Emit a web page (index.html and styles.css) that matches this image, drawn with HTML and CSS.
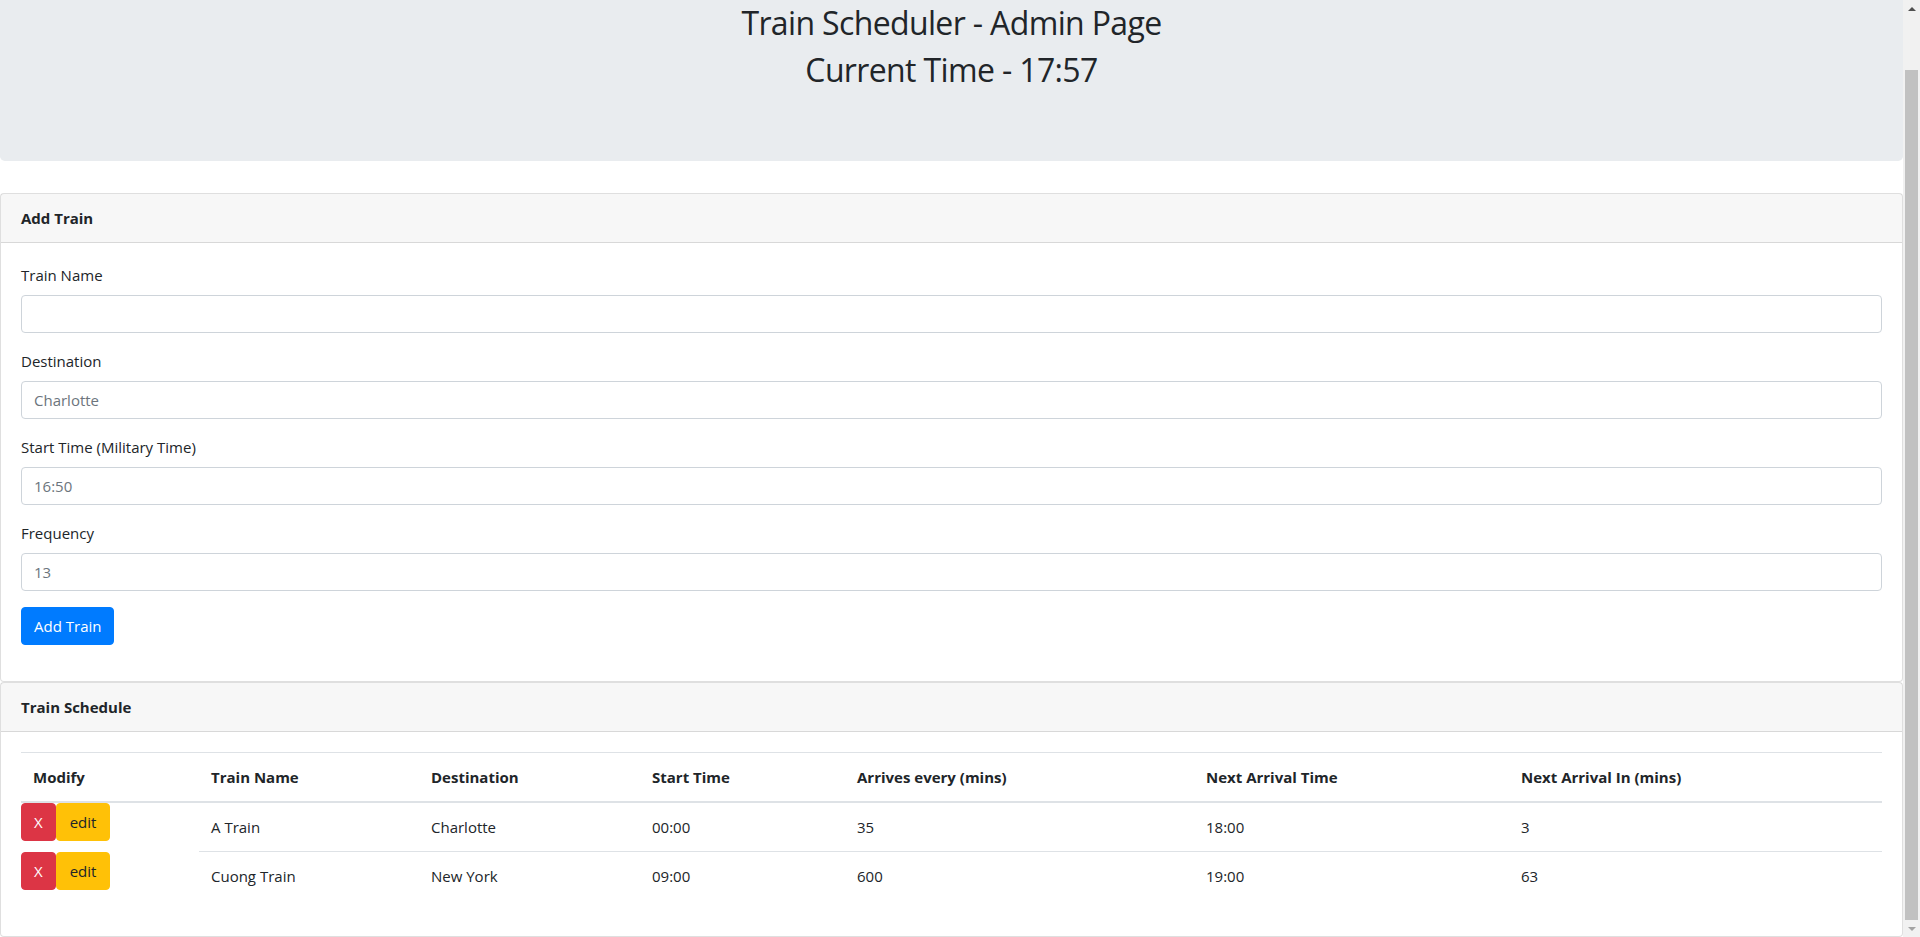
FILE: index.html
```html
<!DOCTYPE html>
<html lang="en">
<head>
<meta charset="utf-8">
<title>Train Scheduler - Admin Page</title>
<link rel="stylesheet" href="styles.css">
</head>
<body>
<div class="app">
  <main class="viewport">
    <div class="jumbotron">
      <h2>Train Scheduler - Admin Page</h2>
      <h2>Current Time - 17:57</h2>
    </div>

    <section class="card">
      <div class="card-header">Add Train</div>
      <div class="card-body">
        <form class="form">
          <div class="form-group">
            <label>Train Name</label>
            <input class="form-control" type="text">
          </div>
          <div class="form-group">
            <label>Destination</label>
            <input class="form-control" type="text" placeholder="Charlotte">
          </div>
          <div class="form-group">
            <label>Start Time (Military Time)</label>
            <input class="form-control" type="text" placeholder="16:50">
          </div>
          <div class="form-group">
            <label>Frequency</label>
            <input class="form-control" type="text" placeholder="13">
          </div>
          <button type="button" class="btn btn-primary">Add Train</button>
        </form>
      </div>
    </section>

    <section class="card">
      <div class="card-header">Train Schedule</div>
      <div class="card-body">
        <table class="table">
          <colgroup>
            <col class="c1"><col class="c2"><col class="c3"><col class="c4"><col class="c5"><col class="c6"><col class="c7">
          </colgroup>
          <thead>
            <tr>
              <th>Modify</th>
              <th>Train Name</th>
              <th>Destination</th>
              <th>Start Time</th>
              <th>Arrives every (mins)</th>
              <th>Next Arrival Time</th>
              <th>Next Arrival In (mins)</th>
            </tr>
          </thead>
          <tbody>
            <tr>
              <td class="modify"><button type="button" class="btn btn-danger">X</button><button type="button" class="btn btn-warning">edit</button></td>
              <td>A Train</td>
              <td>Charlotte</td>
              <td>00:00</td>
              <td>35</td>
              <td>18:00</td>
              <td>3</td>
            </tr>
            <tr>
              <td class="modify"><button type="button" class="btn btn-danger">X</button><button type="button" class="btn btn-warning">edit</button></td>
              <td>Cuong Train</td>
              <td>New York</td>
              <td>09:00</td>
              <td>600</td>
              <td>19:00</td>
              <td>63</td>
            </tr>
          </tbody>
        </table>
      </div>
    </section>
  </main>

  <div class="scrollbar">
    <div class="sb-btn sb-up"></div>
    <div class="sb-track"><div class="sb-thumb"></div></div>
    <div class="sb-btn sb-down"></div>
  </div>
</div>
</body>
</html>
```

FILE: styles.css
```css
html, body {
  margin: 0;
  height: 100%;
}

body {
  font-family: "Open Sans", "Noto Sans", sans-serif;
  font-size: 16px;
  line-height: 24px;
  color: #212529;
  background: #fff;
  overflow: hidden;
}

.app {
  display: flex;
  height: 100vh;
}

.viewport {
  flex: 1;
  min-width: 0;
  display: flex;
  flex-direction: column;
  justify-content: flex-end;
  overflow: hidden;
}

.viewport > * {
  flex-shrink: 0;
}

/* Jumbotron */
.jumbotron {
  background: #e9ecef;
  padding: 64px 32px;
  margin-bottom: 32px;
  border-radius: 4.8px;
  text-align: center;
}

.jumbotron h2 {
  font-size: 32px;
  font-weight: 400;
  line-height: 38.4px;
  margin: 0 0 8px;
  letter-spacing: -0.02em;
}

/* Card */
.card {
  background: #fff;
  border: 1px solid rgba(0, 0, 0, 0.125);
  border-radius: 4px;
}

.card-header {
  padding: 12px 20px;
  background: rgba(0, 0, 0, 0.03);
  border-bottom: 1px solid rgba(0, 0, 0, 0.125);
  font-weight: 700;
  font-size: 15px;
  line-height: 24px;
}

.card-body {
  padding: 20px;
}

.form {
  margin: 0 0 16px;
}

.form-group {
  margin-bottom: 16px;
}

.form-group label {
  display: inline-block;
  margin-bottom: 8px;
  font-size: 15px;
  line-height: 24px;
}

.form-control {
  display: block;
  box-sizing: border-box;
  width: 100%;
  height: 38px;
  padding: 6px 12px;
  font-family: inherit;
  font-size: 15px;
  line-height: 24px;
  color: #495057;
  background: #fff;
  border: 1px solid #ced4da;
  border-radius: 4px;
  margin: 0;
}

.form-control::placeholder {
  color: #6c757d;
  opacity: 1;
}

/* Buttons */
.btn {
  display: inline-block;
  box-sizing: border-box;
  font-family: inherit;
  font-size: 15px;
  line-height: 24px;
  height: 38px;
  padding: 6px 12px;
  border: 1px solid transparent;
  border-radius: 4px;
  margin: 0;
  cursor: pointer;
  vertical-align: top;
}

.btn-primary {
  color: #fff;
  background: #007bff;
  border-color: #007bff;
}

.btn-danger {
  color: #fff;
  background: #dc3545;
  border-color: #dc3545;
}

.btn-warning {
  color: #212529;
  background: #ffc107;
  border-color: #ffc107;
  padding: 6px 13px;
}

/* Table */
.table {
  width: 100%;
  table-layout: fixed;
  border-collapse: collapse;
  margin-bottom: 16px;
  font-size: 15px;
}

.c1 { width: 178px; }
.c2 { width: 220px; }
.c3 { width: 221px; }
.c4 { width: 205px; }
.c5 { width: 349px; }
.c6 { width: 315px; }
.c7 { width: auto; }

.table th,
.table td {
  padding: 12px;
  line-height: 24px;
  text-align: left;
  vertical-align: top;
  border-top: 1px solid #dee2e6;
}

.table thead th {
  vertical-align: bottom;
  border-bottom: 2px solid #dee2e6;
  font-weight: 700;
}

.table td.modify {
  padding: 0;
  border-top: none;
  white-space: nowrap;
}

/* Scrollbar */
.scrollbar {
  width: 17px;
  flex-shrink: 0;
  background: #f1f1f1;
  display: flex;
  flex-direction: column;
}

.sb-btn {
  height: 17px;
  display: flex;
  align-items: center;
  justify-content: center;
}

.sb-up::before {
  content: "";
  border-left: 4px solid transparent;
  border-right: 4px solid transparent;
  border-bottom: 4px solid #505050;
}

.sb-down::before {
  content: "";
  border-left: 4px solid transparent;
  border-right: 4px solid transparent;
  border-top: 4px solid #a3a3a3;
}

.sb-track {
  flex: 1;
  display: flex;
  flex-direction: column;
  padding: 53px 2px 0;
}

.sb-thumb {
  flex: 1;
  background: #c1c1c1;
}
```
